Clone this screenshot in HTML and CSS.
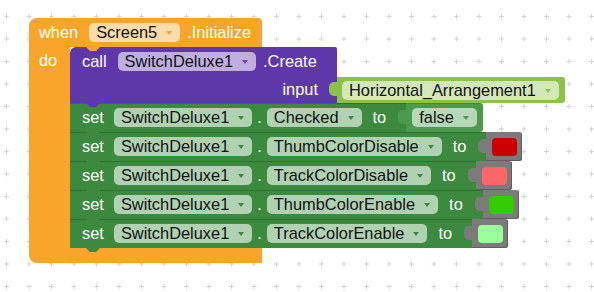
FILE: index.html
```html
<!DOCTYPE html>
<html lang="en">
<head>
    <meta charset="UTF-8">
    <title>Blocks</title>
    <link rel="stylesheet" href="styles.css">
</head>
<body>
    <div class="workspace">
        <svg class="grid" width="594" height="292">
            <defs>
                <pattern id="dots" x="4" y="14" width="22.5" height="22.5" patternUnits="userSpaceOnUse">
                    <rect x="0" y="2" width="5" height="1" fill="#d2d2d2"/>
                    <rect x="2" y="0" width="1" height="5" fill="#d2d2d2"/>
                </pattern>
            </defs>
            <rect width="594" height="292" fill="url(#dots)"/>
        </svg>

        <div class="event">
            <div class="event-head">
                <span class="label">when</span>
                <span class="field field-orange gap-l">Screen5<i class="arrow"></i></span>
                <span class="label gap-s">.Initialize</span>
            </div>
            <div class="event-body">
                <div class="event-arm"><span class="label">do</span></div>
                <div class="stack">
                    <!-- call block with its input -->
                    <div class="row row-call">
                        <div class="block call">
                            <div class="call-top">
                                <span class="label">call</span>
                                <span class="field field-purple gap-l">SwitchDeluxe1<i class="arrow"></i></span>
                                <span class="label gap-s">.Create</span>
                            </div>
                            <div class="call-input">
                                <span class="label">input</span>
                            </div>
                        </div>
                        <div class="value lime">
                            <span class="field field-lime">Horizontal_Arrangement1<i class="arrow"></i></span>
                        </div>
                    </div>

                    <div class="row">
                        <div class="block setter">
                            <span class="label">set</span>
                            <span class="field field-green gap-m">SwitchDeluxe1<i class="arrow"></i></span>
                            <span class="label dot">.</span>
                            <span class="field field-green">Checked<i class="arrow"></i></span>
                            <span class="label to">to</span>
                        </div>
                        <div class="value logic">
                            <span class="field field-logic">false<i class="arrow"></i></span>
                        </div>
                    </div>

                    <div class="row">
                        <div class="block setter">
                            <span class="label">set</span>
                            <span class="field field-green gap-m">SwitchDeluxe1<i class="arrow"></i></span>
                            <span class="label dot">.</span>
                            <span class="field field-green">ThumbColorDisable<i class="arrow"></i></span>
                            <span class="label to">to</span>
                        </div>
                        <div class="value color"><span class="swatch red"></span></div>
                    </div>

                    <div class="row">
                        <div class="block setter">
                            <span class="label">set</span>
                            <span class="field field-green gap-m">SwitchDeluxe1<i class="arrow"></i></span>
                            <span class="label dot">.</span>
                            <span class="field field-green">TrackColorDisable<i class="arrow"></i></span>
                            <span class="label to">to</span>
                        </div>
                        <div class="value color"><span class="swatch pink"></span></div>
                    </div>

                    <div class="row">
                        <div class="block setter">
                            <span class="label">set</span>
                            <span class="field field-green gap-m">SwitchDeluxe1<i class="arrow"></i></span>
                            <span class="label dot">.</span>
                            <span class="field field-green">ThumbColorEnable<i class="arrow"></i></span>
                            <span class="label to">to</span>
                        </div>
                        <div class="value color"><span class="swatch green"></span></div>
                    </div>

                    <div class="row">
                        <div class="block setter">
                            <span class="label">set</span>
                            <span class="field field-green gap-m">SwitchDeluxe1<i class="arrow"></i></span>
                            <span class="label dot">.</span>
                            <span class="field field-green">TrackColorEnable<i class="arrow"></i></span>
                            <span class="label to">to</span>
                        </div>
                        <div class="value color"><span class="swatch mint"></span></div>
                    </div>
                </div>
            </div>
            <div class="event-foot"></div>
        </div>
    </div>
</body>
</html>
```

FILE: styles.css
```css
body {
    margin: 0;
    background: #fff;
    font-family: "Liberation Sans", Arial, sans-serif;
    font-size: 16.4px;
}

.workspace {
    position: relative;
    width: 594px;
    height: 292px;
    overflow: hidden;
}

.grid {
    position: absolute;
    left: 0;
    top: 0;
}

/* event block (when ... do) */
.event {
    position: absolute;
    left: 29px;
    top: 18px;
}

.event-head {
    position: relative;
    display: flex;
    align-items: center;
    width: 233px;
    height: 29px;
    box-sizing: border-box;
    padding-left: 10px;
    background: #f9a52b;
    border-radius: 8px 4px 0 0;
}

.event-head::after {
    content: "";
    position: absolute;
    left: 57px;
    bottom: -4px;
    width: 14px;
    height: 4px;
    background: #f9a52b;
    clip-path: polygon(0 0, 100% 0, 72% 100%, 28% 100%);
    z-index: 2;
}

.event-body {
    display: flex;
}

.event-arm {
    width: 41px;
    background: #f9a52b;
    padding: 4px 0 0 10px;
    box-sizing: border-box;
}

.event-foot {
    width: 233px;
    height: 15px;
    background: #f9a52b;
    border-radius: 0 0 0 8px;
}

.stack {
    display: flex;
    flex-direction: column;
    align-items: flex-start;
}

.row {
    display: flex;
}

.row-call {
    align-items: flex-end;
}

/* labels and fields */
.label {
    color: #fff;
    line-height: 19px;
    white-space: nowrap;
}

.gap-l {
    margin-left: 11px;
}

.gap-m {
    margin-left: 10px;
}

.gap-s {
    margin-left: 7px;
}

.dot {
    margin: 0 5px;
}

.to {
    margin-left: 11px;
}

.field {
    display: inline-flex;
    align-items: center;
    gap: 9px;
    height: 19px;
    padding: 0 8px 0 7px;
    border-radius: 5px;
    background: rgba(255, 255, 255, 0.6);
    color: #111;
    line-height: 19px;
    white-space: nowrap;
}

.arrow {
    width: 0;
    height: 0;
    border-left: 3.5px solid transparent;
    border-right: 3.5px solid transparent;
    border-top: 4px solid #3b8a3e;
    margin-top: 1px;
}

.field-orange {
    background: #fddcab;
}

.field-orange .arrow {
    border-top-color: #f3a23a;
}

.field-purple {
    background: #bfaee0;
}

.field-purple .arrow {
    border-top-color: #6a46b4;
}

.field-lime {
    background: #d3e8b8;
}

.field-lime .arrow {
    border-top-color: #8bc34a;
}

.field-green {
    background: #b0d1b2;
}

.field-logic {
    background: #b6d8b8;
}

.field-logic .arrow {
    border-top-color: #4a9b4d;
}

/* statement blocks */
.block {
    position: relative;
}

.block::after {
    content: "";
    position: absolute;
    left: 16px;
    bottom: -4px;
    width: 14px;
    height: 4px;
    background: inherit;
    clip-path: polygon(0 0, 100% 0, 72% 100%, 28% 100%);
    z-index: 2;
}

.call {
    width: 267px;
    height: 56px;
    background: #5e38aa;
    border-radius: 6px 2px 0 0;
}

.call-top {
    display: flex;
    align-items: center;
    height: 28px;
    padding-left: 12px;
}

.call-input {
    display: flex;
    align-items: center;
    justify-content: flex-end;
    height: 28px;
    padding-right: 19px;
}

.setter {
    display: flex;
    align-items: center;
    height: 29px;
    box-sizing: border-box;
    padding: 0 20px 0 12px;
    background: #3b8a3e;
    box-shadow: inset 0 1px 0 rgba(0, 0, 0, 0.18);
}

/* value blocks plugged into inputs */
.value {
    position: relative;
    display: flex;
    align-items: center;
    box-sizing: border-box;
}

.value::before {
    content: "";
    position: absolute;
    left: -8px;
    top: 7px;
    width: 9px;
    height: 14px;
    background: inherit;
    border-radius: 5px 0 0 5px;
    z-index: 2;
}

.lime {
    height: 26px;
    padding: 0 6px 0 5px;
    background: #8bc34a;
    border-radius: 0 3px 3px 0;
}

.lime::before {
    top: 5px;
}

.logic {
    height: 29px;
    padding: 0 6px;
    background: #4a9b4d;
    border-radius: 0 3px 3px 0;
    box-shadow: inset 0 1px 0 rgba(0, 0, 0, 0.12);
}

.color {
    height: 29px;
    padding: 0 5px 0 6px;
    background: #7b7b7b;
    border-radius: 0 3px 3px 0;
    box-shadow: inset -1px -1px 0 #5f5f5f;
}

.swatch {
    width: 25px;
    height: 18px;
    border-radius: 4px;
}

.red {
    background: #cc0000;
}

.pink {
    background: #ff6666;
}

.green {
    background: #33cc00;
}

.mint {
    background: #99ff99;
}
```
